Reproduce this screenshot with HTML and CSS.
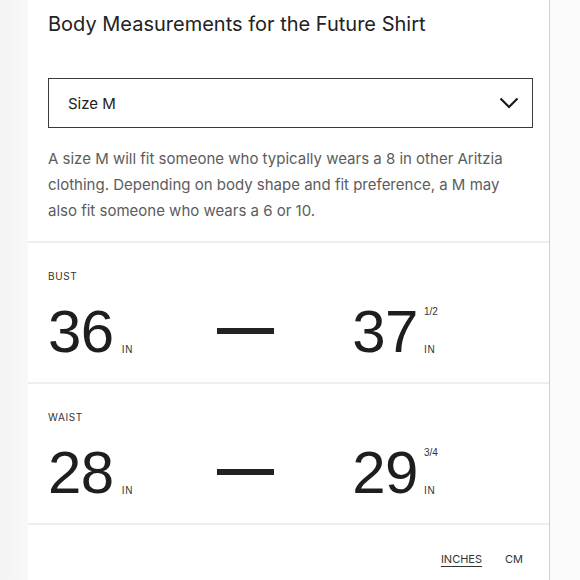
FILE: index.html
```html
<!DOCTYPE html>
<html>
<head>
<meta charset="utf-8">
<link rel="stylesheet" href="styles.css">
</head>
<body>
<div class="panel">
  <div class="intro">
    <h1 class="title">Body Measurements for the Future Shirt</h1>
    <div class="select">
      <span class="select-label">Size M</span>
      <svg class="chevron" width="20" height="12" viewBox="0 0 20 12"><polyline points="1.5,1.5 10,10 18.5,1.5" fill="none" stroke="#1a1a1a" stroke-width="2.2"/></svg>
    </div>
    <p class="desc">A size M will fit someone who typically wears a 8 in other Aritzia clothing. Depending on body shape and fit preference, a M may also fit someone who wears a 6 or 10.</p>
  </div>

  <div class="measure">
    <div class="label">BUST</div>
    <div class="row">
      <div class="val">
        <span class="num">36</span>
        <span class="side"><span class="frac"></span><span class="unit">IN</span></span>
      </div>
      <div class="dash"></div>
      <div class="val right">
        <span class="num">37</span>
        <span class="side"><span class="frac">1/2</span><span class="unit">IN</span></span>
      </div>
    </div>
  </div>

  <div class="measure">
    <div class="label">WAIST</div>
    <div class="row">
      <div class="val">
        <span class="num">28</span>
        <span class="side"><span class="frac"></span><span class="unit">IN</span></span>
      </div>
      <div class="dash"></div>
      <div class="val right">
        <span class="num">29</span>
        <span class="side"><span class="frac">3/4</span><span class="unit">IN</span></span>
      </div>
    </div>
  </div>

  <div class="units">
    <span class="unit-opt active">INCHES</span>
    <span class="unit-opt">CM</span>
  </div>
</div>
</body>
</html>
```

FILE: styles.css
```css
html, body {
  margin: 0;
  padding: 0;
  height: 100%;
}
body {
  background: linear-gradient(90deg, #f3f3f3 0px, #f8f8f8 28px, #fafafa 100%);
  font-family: "Inter", "Liberation Sans", sans-serif;
  color: #222;
  overflow: hidden;
}
.panel {
  margin-left: 28px;
  width: 522px;
  min-height: 580px;
  background: #fff;
  border-right: 1px solid #cfcfcf;
  box-sizing: border-box;
}
.intro {
  padding: 10px 16px 0 20px;
}
.title {
  margin: 0;
  font-size: 20px;
  font-weight: 400;
  line-height: 28px;
  color: #222;
}
.select {
  margin-top: 40px;
  height: 50px;
  border: 1px solid #3a3a3a;
  box-sizing: border-box;
  display: flex;
  align-items: center;
  justify-content: space-between;
  padding: 0 13px 0 19px;
}
.select-label {
  font-size: 15px;
  color: #222;
}
.chevron {
  display: block;
}
.desc {
  margin: 18px 0 0;
  padding: 0 24px 17px 0;
  font-size: 15px;
  line-height: 26px;
  color: #5c5c5c;
}
.measure {
  border-top: 2px solid #eeeeee;
  padding: 27px 0 25px 20px;
  height: 141px;
  box-sizing: border-box;
}
.label {
  font-size: 10px;
  letter-spacing: 0.6px;
  color: #333;
  line-height: 12px;
}
.row {
  margin-top: 20px;
  display: grid;
  grid-template-columns: 169px 57px 168px;
  align-items: center;
}
.val {
  display: flex;
  align-items: stretch;
}
.val.right {
  justify-content: flex-end;
}
.num {
  font-family: "Liberation Sans", sans-serif;
  font-size: 60px;
  line-height: 60px;
  color: #1e1e1e;
  letter-spacing: -0.5px;
}
.side {
  display: flex;
  flex-direction: column;
  justify-content: space-between;
  padding: 4px 0 7px 8px;
  width: 16px;
  font-family: "Liberation Sans", sans-serif;
  font-size: 10px;
  line-height: 11px;
  color: #333;
}
.val.right .side {
  padding-left: 6px;
  width: 18px;
}
.unit { letter-spacing: 0.6px; }
.dash {
  height: 6px;
  background: #222;
  margin-top: -2px;
}
.units {
  border-top: 2px solid #eeeeee;
  display: flex;
  justify-content: flex-end;
  gap: 23px;
  padding: 27px 26px 0 0;
  font-size: 11px;
  color: #333;
}
.unit-opt.active {
  text-decoration: underline;
  text-underline-offset: 3px;
}
```
